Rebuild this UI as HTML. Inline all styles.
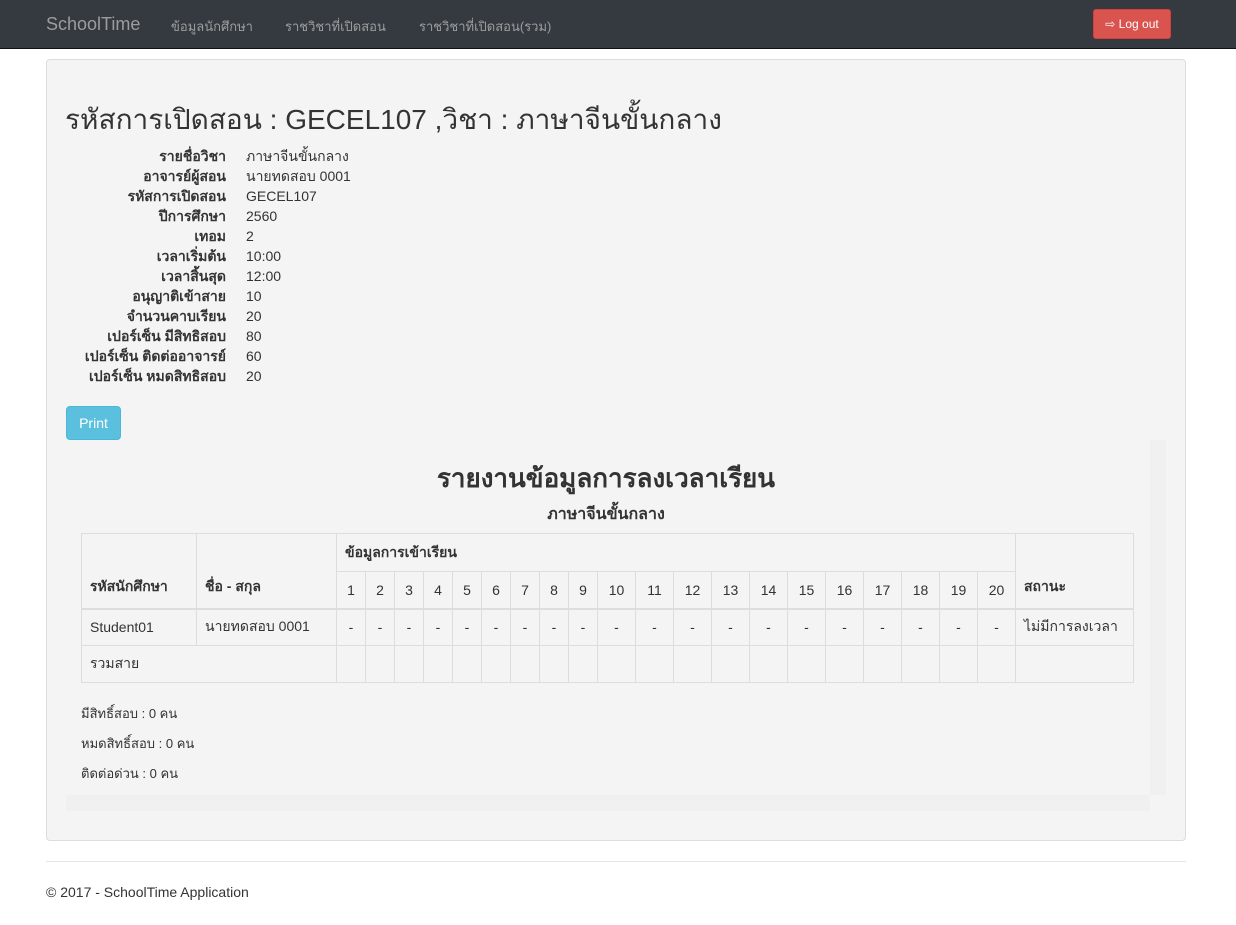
<!DOCTYPE html>
<html><head><meta charset="utf-8"><style>
*{box-sizing:border-box}
body{margin:0;width:1236px;height:925px;background:#fff;font-family:"Liberation Sans",sans-serif;font-size:14px;color:#333;position:relative;overflow:hidden}
.nav{position:absolute;left:0;top:0;width:1236px;height:49px;background:#343a40;border-bottom:1px solid #111}
.nav span{position:absolute;top:16px;color:#9d9d9d;font-size:13px}
.brand{left:46px;top:14px!important;font-size:18px!important}
.logout{position:absolute;left:1093px;top:9px;width:78px;height:30px;background:#d9534f;border:1px solid #d43f3a;border-radius:3px;color:#fff;font-size:12px;line-height:28px;text-align:center}
.well{position:absolute;left:46px;top:59px;width:1140px;height:782px;background:#f4f4f4;border:1px solid #ddd;border-radius:4px}
h1{position:absolute;left:65px;top:98px;margin:0;font-size:28px;font-weight:normal;color:#333}
.info{position:absolute;top:146px;font-size:14px;line-height:20px}
.info.l{left:60px;width:166px;text-align:right;font-weight:bold}
.info.r{left:246px}
.print{position:absolute;left:66px;top:406px;width:55px;height:34px;background:#5bc0de;border:1px solid #46b8da;border-radius:4px;color:#fff;line-height:32px;text-align:center}
.scroll{position:absolute;left:66px;top:440px;width:1100px;height:371px;background:#f4f4f4}
.vs{position:absolute;right:0;top:0;width:16px;height:355px;background:#f0f0f0}
.hs{position:absolute;left:0;bottom:0;width:1084px;height:16px;background:#f0f0f0}
.t1{position:absolute;left:0;width:1212px;text-align:center;font-weight:bold}
table{position:absolute;left:81px;top:533px;border-collapse:collapse;width:1053px}
td,th{border:1px solid #ddd;padding:0 8px;font-size:14px;text-align:left}
th{font-weight:bold}
.d td{height:37px}
.n{text-align:center;padding:0}
.foot{position:absolute;left:46px;top:861px;width:1140px;border-top:1px solid #e5e5e5}
</style></head><body>
<div class="nav"><span class="brand">SchoolTime</span><span style="left:171px">ข้อมูลนักศึกษา</span><span style="left:285px">ราชวิชาที่เปิดสอน</span><span style="left:419px">ราชวิชาที่เปิดสอน(รวม)</span>
<div class="logout">⇨ Log out</div></div>
<div class="well"></div>
<h1>รหัสการเปิดสอน : GECEL107 ,วิชา : ภาษาจีนขั้นกลาง</h1>
<div class="info l">รายชื่อวิชา<br>อาจารย์ผู้สอน<br>รหัสการเปิดสอน<br>ปีการศึกษา<br>เทอม<br>เวลาเริ่มต้น<br>เวลาสิ้นสุด<br>อนุญาติเข้าสาย<br>จำนวนคาบเรียน<br>เปอร์เซ็น มีสิทธิสอบ<br>เปอร์เซ็น ติดต่ออาจารย์<br>เปอร์เซ็น หมดสิทธิสอบ</div>
<div class="info r">ภาษาจีนขั้นกลาง<br>นายทดสอบ 0001<br>GECEL107<br>2560<br>2<br>10:00<br>12:00<br>10<br>20<br>80<br>60<br>20</div>
<div class="print">Print</div>
<div class="scroll"><div class="vs"></div><div class="hs"></div></div>
<div class="t1" style="top:458px;font-size:26px">รายงานข้อมูลการลงเวลาเรียน</div>
<div class="t1" style="top:502px;font-size:16px">ภาษาจีนขั้นกลาง</div>
<table>
<colgroup><col style="width:115px"><col style="width:140px"><col span="9" style="width:29px"><col span="11" style="width:38px"><col></colgroup>
<tr style="height:38px"><th rowspan="2" style="vertical-align:bottom;padding-bottom:10px">รหัสนักศึกษา</th><th rowspan="2" style="vertical-align:bottom;padding-bottom:10px">ชื่อ - สกุล</th><th colspan="20">ข้อมูลการเข้าเรียน</th><th rowspan="2" style="vertical-align:bottom;padding-bottom:10px">สถานะ</th></tr>
<tr style="height:37px;border-bottom:2px solid #ddd"><td class="n">1</td><td class="n">2</td><td class="n">3</td><td class="n">4</td><td class="n">5</td><td class="n">6</td><td class="n">7</td><td class="n">8</td><td class="n">9</td><td class="n">10</td><td class="n">11</td><td class="n">12</td><td class="n">13</td><td class="n">14</td><td class="n">15</td><td class="n">16</td><td class="n">17</td><td class="n">18</td><td class="n">19</td><td class="n">20</td></tr>
<tr class="d"><td>Student01</td><td>นายทดสอบ 0001</td><td class="n">-</td><td class="n">-</td><td class="n">-</td><td class="n">-</td><td class="n">-</td><td class="n">-</td><td class="n">-</td><td class="n">-</td><td class="n">-</td><td class="n">-</td><td class="n">-</td><td class="n">-</td><td class="n">-</td><td class="n">-</td><td class="n">-</td><td class="n">-</td><td class="n">-</td><td class="n">-</td><td class="n">-</td><td class="n">-</td><td>ไม่มีการลงเวลา</td></tr>
<tr class="d"><td colspan="2">รวมสาย</td><td></td><td></td><td></td><td></td><td></td><td></td><td></td><td></td><td></td><td></td><td></td><td></td><td></td><td></td><td></td><td></td><td></td><td></td><td></td><td></td><td></td></tr>
</table>
<div style="position:absolute;left:81px;top:699px;line-height:30px;font-size:13px">มีสิทธิ์สอบ : 0 คน<br>หมดสิทธิ์สอบ : 0 คน<br>ติดต่อด่วน : 0 คน</div>
<div class="foot"></div>
<div style="position:absolute;left:46px;top:884px">© 2017 - SchoolTime Application</div>
</body></html>
